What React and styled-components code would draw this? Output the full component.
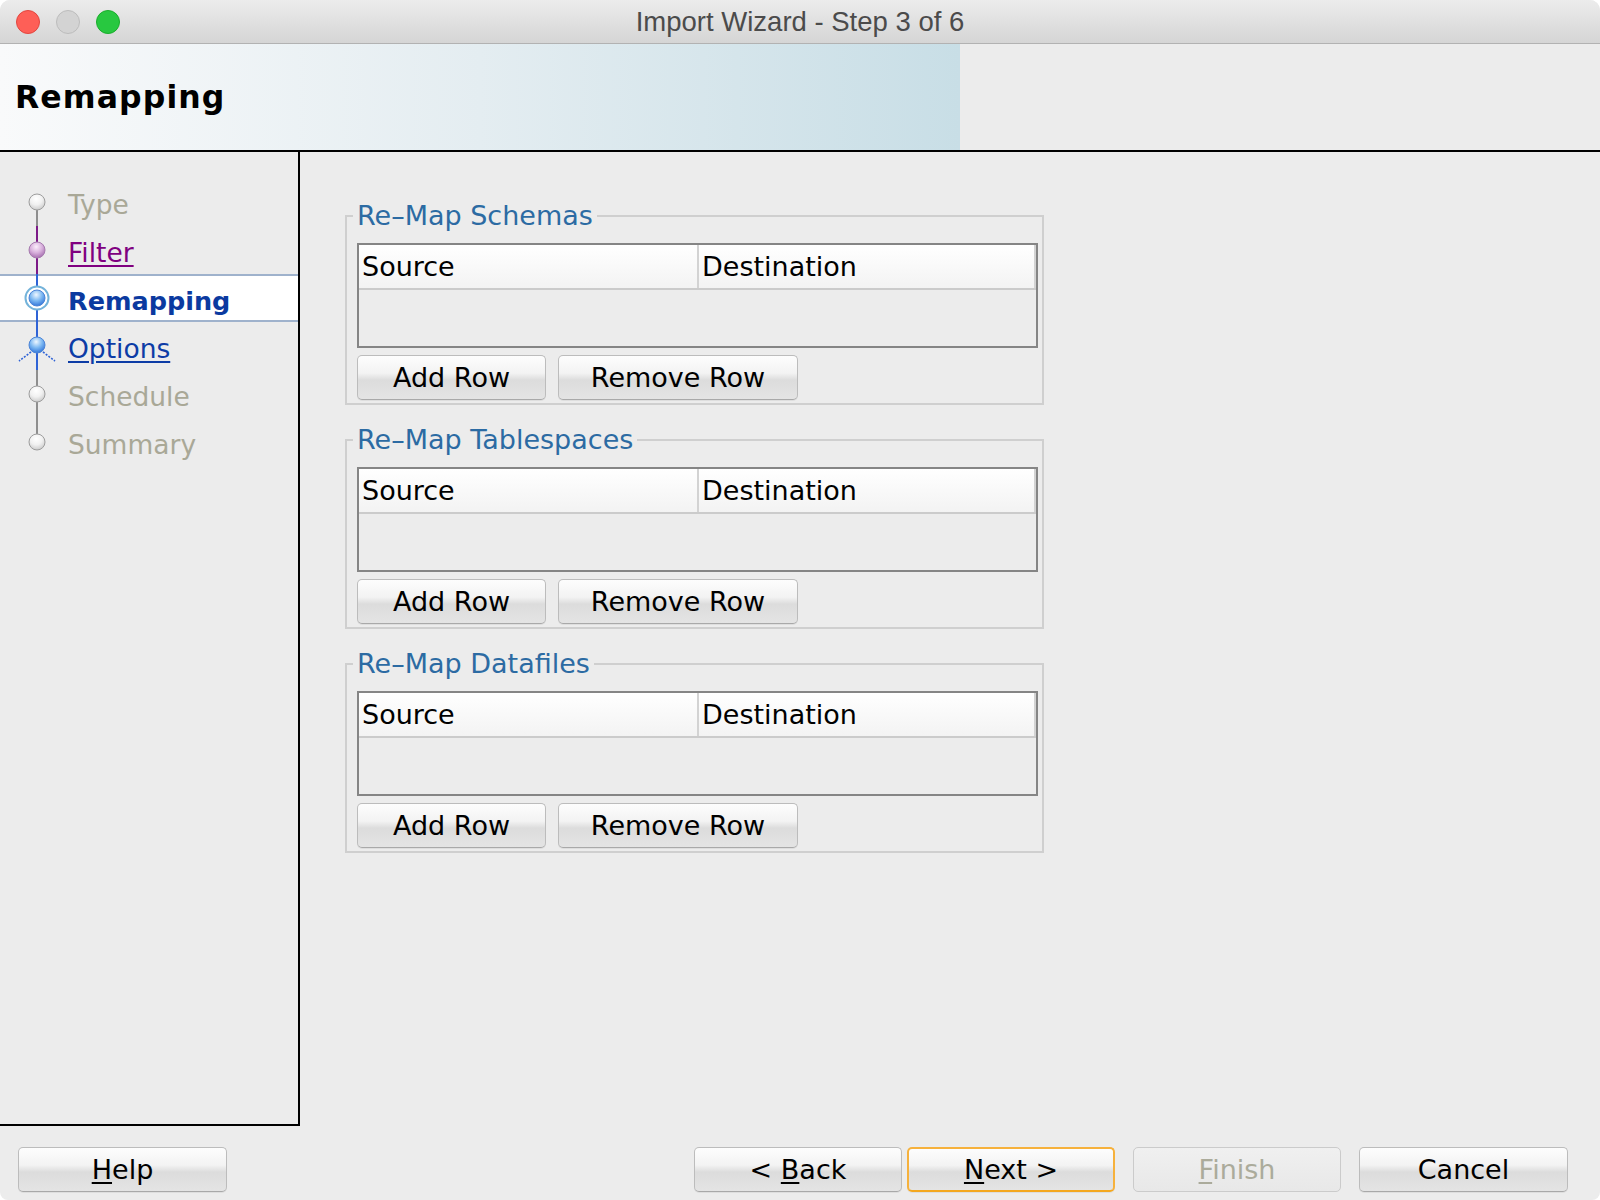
import React from 'react';
import styled, { createGlobalStyle } from 'styled-components';

const GlobalStyle = createGlobalStyle`
    html, body {
        margin: 0;
        padding: 0;
        background: #ffffff;
    }
    body {
        font-family: "DejaVu Sans", "Noto Sans", sans-serif;
    }
    * {
        box-sizing: border-box;
    }
`;

const LINE = { gray: '#8e8e8e', purple: '#7d1a88', blue: '#2f63d6' };

const steps = [
    { label: 'Type', state: 'todo', top: null, bottom: 'gray' },
    { label: 'Filter', state: 'visited', top: 'purple', bottom: 'purple' },
    { label: 'Remapping', state: 'current', top: 'blue', bottom: 'blue' },
    { label: 'Options', state: 'next', top: 'blue', bottom: 'blue' },
    { label: 'Schedule', state: 'todo', top: 'gray', bottom: 'gray' },
    { label: 'Summary', state: 'todo', top: 'gray', bottom: null },
];

const groups = ['Re–Map Schemas', 'Re–Map Tablespaces', 'Re–Map Datafiles'];

const sphere = {
    todo: { stops: ['#ffffff', '#f1f1f1', '#c6c6c6'], stroke: '#9d9d9d' },
    visited: { stops: ['#fbeefb', '#d8b0dc', '#a066aa'], stroke: '#a57aae' },
    current: { stops: ['#eef7ff', '#7cb8f2', '#2a6dd6'], stroke: '#4c84d6' },
    next: { stops: ['#eef7ff', '#7cb8f2', '#2a6dd6'], stroke: '#4c84d6' },
};

function StepMarker({ step, id }) {
    const cy = step.state === 'next' ? 23 : 24;
    const r = 8;
    const look = sphere[step.state];
    return (
        <svg width="68" height="48" viewBox="0 0 68 48">
            <defs>
                <radialGradient id={`sph-${id}`} cx="45%" cy="30%" r="75%">
                    <stop offset="0%" stopColor={look.stops[0]} />
                    <stop offset="50%" stopColor={look.stops[1]} />
                    <stop offset="100%" stopColor={look.stops[2]} />
                </radialGradient>
            </defs>
            {step.top && (
                <line x1="37" y1="0" x2="37" y2={cy - r} stroke={LINE[step.top]} strokeWidth="2" />
            )}
            {step.bottom && (
                <line x1="37" y1={cy + r} x2="37" y2="48" stroke={LINE[step.bottom]} strokeWidth="2" />
            )}
            {step.state === 'current' && (
                <circle cx="37" cy={cy} r="11.5" fill="#ffffff" stroke="#74b3da" strokeWidth="2" />
            )}
            {step.state === 'next' && (
                <g stroke={LINE.blue} strokeWidth="1.6" strokeDasharray="2 1.4">
                    <line x1="31" y1="30" x2="19" y2="39" />
                    <line x1="43" y1="30" x2="55" y2="39" />
                </g>
            )}
            <circle cx="37" cy={cy} r={r} fill={`url(#sph-${id})`} stroke={look.stroke} strokeWidth="1" />
        </svg>
    );
}

function App() {
    return (
        <>
            <GlobalStyle />
            <Window>
                <TitleBar>
                    <Lights>
                        <Light $fill="#fe5f57" $edge="#e2463f" />
                        <Light $fill="#d3d3d3" $edge="#bcbcbc" />
                        <Light $fill="#28c840" $edge="#1aad2c" />
                    </Lights>
                    <WindowTitle>Import Wizard - Step 3 of 6</WindowTitle>
                    <span />
                </TitleBar>

                <Header>
                    <HeaderTitle>Remapping</HeaderTitle>
                </Header>

                <Body>
                    <Sidebar>
                        {steps.map((step, i) => (
                            <Step key={step.label} $current={step.state === 'current'}>
                                <StepMarker step={step} id={i} />
                                <StepLabel $state={step.state}>{step.label}</StepLabel>
                            </Step>
                        ))}
                    </Sidebar>

                    <Content>
                        {groups.map((title) => (
                            <Group key={title}>
                                <GroupTitle>{title}</GroupTitle>
                                <Table>
                                    <HeadRow>
                                        <HeadCell>Source</HeadCell>
                                        <HeadCell>Destination</HeadCell>
                                    </HeadRow>
                                    <TableBody />
                                </Table>
                                <ButtonRow>
                                    <Button $width={189}>Add Row</Button>
                                    <Button $width={240}>Remove Row</Button>
                                </ButtonRow>
                            </Group>
                        ))}
                    </Content>
                </Body>

                <Footer>
                    <Button $width={209}>
                        <u>H</u>elp
                    </Button>
                    <FooterRight>
                        <NavPair>
                            <Button $width={208}>
                                {'< '}
                                <u>B</u>ack
                            </Button>
                            <Button $width={208} $default>
                                <u>N</u>
                                {'ext >'}
                            </Button>
                        </NavPair>
                        <Button $width={208} disabled>
                            <u>F</u>inish
                        </Button>
                        <Button $width={209}>Cancel</Button>
                    </FooterRight>
                </Footer>
            </Window>
        </>
    );
}

export default App;

const Window = styled.div`
    width: 1600px;
    height: 1200px;
    display: flex;
    flex-direction: column;
    background: #ececec;
    border-radius: 10px 10px 8px 8px;
    overflow: hidden;
`;

const TitleBar = styled.div`
    height: 44px;
    flex-shrink: 0;
    display: grid;
    grid-template-columns: 1fr auto 1fr;
    align-items: center;
    background: linear-gradient(#ececec, #d5d5d5);
    border-bottom: 1px solid #b2b2b2;
`;

const Lights = styled.div`
    display: flex;
    gap: 16px;
    padding-left: 16px;
`;

const Light = styled.span`
    width: 24px;
    height: 24px;
    border-radius: 50%;
    background: ${(p) => p.$fill};
    border: 1px solid ${(p) => p.$edge};
`;

const WindowTitle = styled.div`
    font-family: "Liberation Sans", Arial, sans-serif;
    font-size: 27.5px;
    color: #4b4b4b;
`;

const Header = styled.div`
    height: 108px;
    flex-shrink: 0;
    display: flex;
    align-items: center;
    padding-left: 15px;
    border-bottom: 2px solid #000000;
    background: linear-gradient(to right, #f9fafb 0px, #e4edf1 480px, #c8dee6 960px, #ececec 960px);
`;

const HeaderTitle = styled.h1`
    margin: 0;
    font-size: 31.5px;
    font-weight: bold;
    letter-spacing: 1.1px;
    color: #000000;
`;

const Body = styled.div`
    flex: 1;
    display: flex;
    min-height: 0;
`;

const Sidebar = styled.nav`
    width: 300px;
    flex-shrink: 0;
    padding-top: 26px;
    border-right: 2px solid #000000;
    border-bottom: 2px solid #000000;
`;

const Step = styled.div`
    height: 48px;
    display: flex;
    align-items: center;
    background: ${(p) => (p.$current ? '#ffffff' : 'transparent')};
    box-shadow: ${(p) =>
        p.$current ? 'inset 0 2px 0 #9fb2cc, inset 0 -2px 0 #9fb2cc' : 'none'};

    svg {
        flex-shrink: 0;
    }
`;

const labelColors = {
    todo: '#a9a897',
    visited: '#800080',
    current: '#0b3aa0',
    next: '#0d3ca6',
};

const StepLabel = styled.span`
    padding-top: 5px;
    font-size: ${(p) => (p.$state === 'current' ? '25.5px' : '26.5px')};
    color: ${(p) => labelColors[p.$state]};
    font-weight: ${(p) => (p.$state === 'current' ? 'bold' : 'normal')};
    text-decoration: ${(p) =>
        p.$state === 'visited' || p.$state === 'next' ? 'underline' : 'none'};
    text-decoration-thickness: 2px;
    text-underline-offset: 3px;
`;

const Content = styled.main`
    flex: 1;
    display: flex;
    flex-direction: column;
    align-items: flex-start;
    gap: 20px;
    padding: 49px 0 0 45px;
`;

const Group = styled.fieldset`
    width: 699px;
    min-width: 0;
    margin: 0;
    padding: 12px 4px 3px 10px;
    border: 2px solid #cfcfcf;
`;

const GroupTitle = styled.legend`
    margin-left: -4px;
    padding: 0 4px;
    font-size: 27px;
    line-height: 30px;
    color: #2c6ba3;
`;

const Table = styled.div`
    height: 105px;
    display: flex;
    flex-direction: column;
    border: 2px solid #858585;
`;

const HeadRow = styled.div`
    height: 45px;
    display: grid;
    grid-template-columns: 340px 337px;
    border-bottom: 2px solid #cbcbcb;
`;

const HeadCell = styled.div`
    display: flex;
    align-items: center;
    padding-left: 3px;
    font-size: 27px;
    color: #000000;
    background: linear-gradient(#ffffff, #f3f3f3);
    border-right: 2px solid #d3d3d3;
`;

const TableBody = styled.div`
    flex: 1;
    background: #ececec;
`;

const ButtonRow = styled.div`
    display: flex;
    gap: 12px;
    margin-top: 7px;
`;

const Button = styled.button`
    width: ${(p) => p.$width}px;
    height: 45px;
    padding: 0;
    display: block;
    line-height: 41px;
    text-align: center;
    white-space: pre;
    font-family: "DejaVu Sans", "Noto Sans", sans-serif;
    font-size: 27px;
    color: #000000;
    border: ${(p) => (p.$default ? '2px solid #f6b13c' : '1px solid #bcbcbc')};
    border-bottom-color: ${(p) => (p.$default ? '#f4a820' : '#a9a9a9')};
    border-radius: 5px;
    background: linear-gradient(#fdfdfd 0%, #f3f3f3 40%, #dcdcdc 56%, #e4e4e4 100%);
    box-shadow: 0 1px 0 rgba(0, 0, 0, 0.06);

    u {
        text-decoration-thickness: 2px;
        text-underline-offset: 3px;
    }

    &:disabled {
        color: #abab9b;
        border-color: #cbcbcb;
        background: linear-gradient(#f0f0f0, #e8e8e8);
        box-shadow: none;
    }
`;

const Footer = styled.footer`
    height: 74px;
    flex-shrink: 0;
    display: flex;
    justify-content: space-between;
    align-items: flex-start;
    padding: 21px 32px 0 18px;
`;

const FooterRight = styled.div`
    display: flex;
    gap: 18px;
`;

const NavPair = styled.div`
    display: flex;
    gap: 5px;
`;
